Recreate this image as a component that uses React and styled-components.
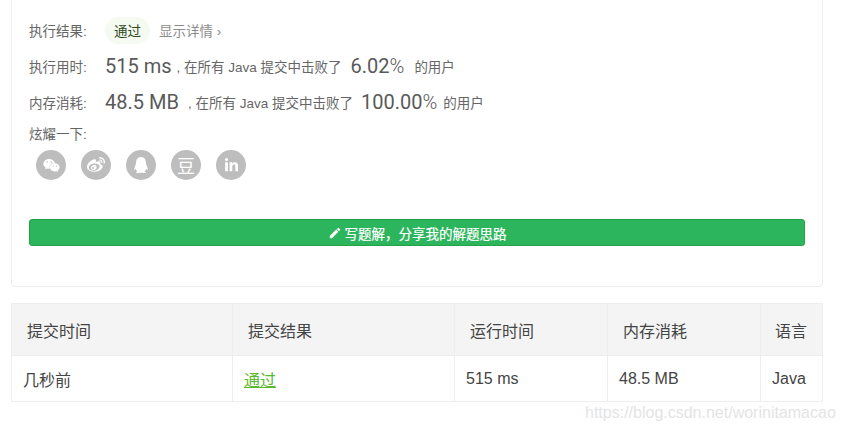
import React from "react";
import styled, { createGlobalStyle } from "styled-components";
import { FaWeixin, FaWeibo, FaQq, FaLinkedinIn } from "react-icons/fa";
import { MdEdit } from "react-icons/md";

const GlobalStyle = createGlobalStyle`
  html, body { margin: 0; padding: 0; background: #fff; }
  body {
    width: 843px;
    height: 432px;
    overflow: hidden;
    position: relative;
    font-family: "Liberation Sans", "Noto Sans CJK SC", sans-serif;
    color: #595959;
  }
`;

const Page = styled.div`
  padding: 0 20px 0 11px;
  display: flex;
  flex-direction: column;
  gap: 16px;
`;

const Card = styled.section`
  height: 299px;
  margin-top: -12px;
  padding: 23px 17px 0;
  box-sizing: border-box;
  border: 1px solid #eeeeee;
  border-radius: 4px;
  display: flex;
  flex-direction: column;
`;

const Row = styled.div`
  height: 36px;
  display: flex;
  align-items: center;
  font-size: 13.5px;
  color: #666;
  white-space: pre;
`;

const Label = styled.span`
  width: 76px;
  flex: none;
`;

const Badge = styled.span`
  height: 27px;
  padding: 0 9px;
  margin-right: 9px;
  border-radius: 14px;
  background: #f6fbf2;
  color: #2b4a1c;
  display: flex;
  align-items: center;
`;

const Details = styled.span`
  color: #8c8c8c;
`;

const BigValue = styled.span`
  font-family: "Roboto", sans-serif;
  font-size: 20px;
  color: #595959;
  margin-left: ${(p) => p.$left || 0}px;
  margin-right: ${(p) => p.$gap}px;
`;

const Percent = styled.span`
  font-weight: 300;
`;

const Share = styled.div`
  margin-top: 6px;
  font-size: 13.5px;
  line-height: 18px;
  color: #666;
`;

const Icons = styled.div`
  margin-top: 6px;
  padding-left: 7px;
  display: flex;
  gap: 15px;
`;

const IconCircle = styled.span`
  width: 30px;
  height: 30px;
  border-radius: 50%;
  background: #bdbdbd;
  color: #fff;
  font-size: ${(p) => p.$size || 16}px;
  display: flex;
  align-items: center;
  justify-content: center;
`;

const WriteButton = styled.button`
  margin-top: 39px;
  height: 27px;
  width: 776px;
  padding: 0;
  border: 1px solid #25a149;
  border-radius: 3px;
  background: #2db55d;
  color: #fff;
  font-family: inherit;
  font-size: 13.5px;
  -webkit-text-stroke: 0.2px #fff;
  display: flex;
  align-items: center;
  justify-content: center;
  gap: 3px;
`;

const Table = styled.div`
  border: 1px solid #eeeeee;
  border-bottom: none;
  display: grid;
  grid-template-columns: 221px 222px 153px 153px 1fr;
`;

const HeadCell = styled.div`
  height: 51px;
  padding-left: ${(p) => p.$pad}px;
  background: #f4f4f4;
  border-bottom: 1px solid #eeeeee;
  border-right: ${(p) => (p.$last ? "none" : "1px solid #eeeeee")};
  color: #444;
  font-size: 16px;
  display: flex;
  align-items: center;
`;

const BodyCell = styled.div`
  height: 45px;
  padding-left: ${(p) => p.$pad}px;
  border-bottom: 1px solid #eeeeee;
  border-right: ${(p) => (p.$last ? "none" : "1px solid #eeeeee")};
  color: #444;
  font-size: 16px;
  display: flex;
  align-items: center;
`;

const ResultLink = styled.a`
  color: #5cb82f;
  text-decoration: underline;
`;

const Watermark = styled.div`
  position: absolute;
  left: 585px;
  top: 404px;
  font-family: "Liberation Sans", sans-serif;
  font-size: 16px;
  color: #e4e4e4;
  white-space: nowrap;
`;

const columns = [
  { title: "提交时间", value: "几秒前", headPad: 15, bodyPad: 11 },
  { title: "提交结果", value: <ResultLink>通过</ResultLink>, headPad: 15, bodyPad: 11 },
  { title: "运行时间", value: "515 ms", headPad: 15, bodyPad: 11 },
  { title: "内存消耗", value: "48.5 MB", headPad: 15, bodyPad: 11 },
  { title: "语言", value: "Java", headPad: 14, bodyPad: 11 },
];

const App = () => {
  return (
    <Page>
      <GlobalStyle />
      <Card>
        <Row>
          <Label>执行结果:</Label>
          <Badge>通过</Badge>
          <Details>显示详情 ›</Details>
        </Row>
        <Row>
          <Label>执行用时:</Label>
          <BigValue $gap={5}>515 ms</BigValue>
          , 在所有 Java 提交中击败了
          <BigValue $left={9} $gap={10}>6.02<Percent>%</Percent></BigValue>
          的用户
        </Row>
        <Row>
          <Label>内存消耗:</Label>
          <BigValue $gap={9}>48.5 MB</BigValue>
          , 在所有 Java 提交中击败了
          <BigValue $left={8} $gap={6}>100.00<Percent>%</Percent></BigValue>
          的用户
        </Row>
        <Share>炫耀一下:</Share>
        <Icons>
          <IconCircle $size={17}><FaWeixin /></IconCircle>
          <IconCircle $size={18}><FaWeibo /></IconCircle>
          <IconCircle $size={16}><FaQq /></IconCircle>
          <IconCircle $size={18}>豆</IconCircle>
          <IconCircle $size={15}><FaLinkedinIn /></IconCircle>
        </Icons>
        <WriteButton>
          <MdEdit size={14} />
          写题解，分享我的解题思路
        </WriteButton>
      </Card>
      <Table>
        {columns.map((col, i) => (
          <HeadCell key={col.title} $pad={col.headPad} $last={i === columns.length - 1}>
            {col.title}
          </HeadCell>
        ))}
        {columns.map((col, i) => (
          <BodyCell key={col.title} $pad={col.bodyPad} $last={i === columns.length - 1}>
            {col.value}
          </BodyCell>
        ))}
      </Table>
      <Watermark>https://blog.csdn.net/worinitamacao</Watermark>
    </Page>
  );
};

export default App;
